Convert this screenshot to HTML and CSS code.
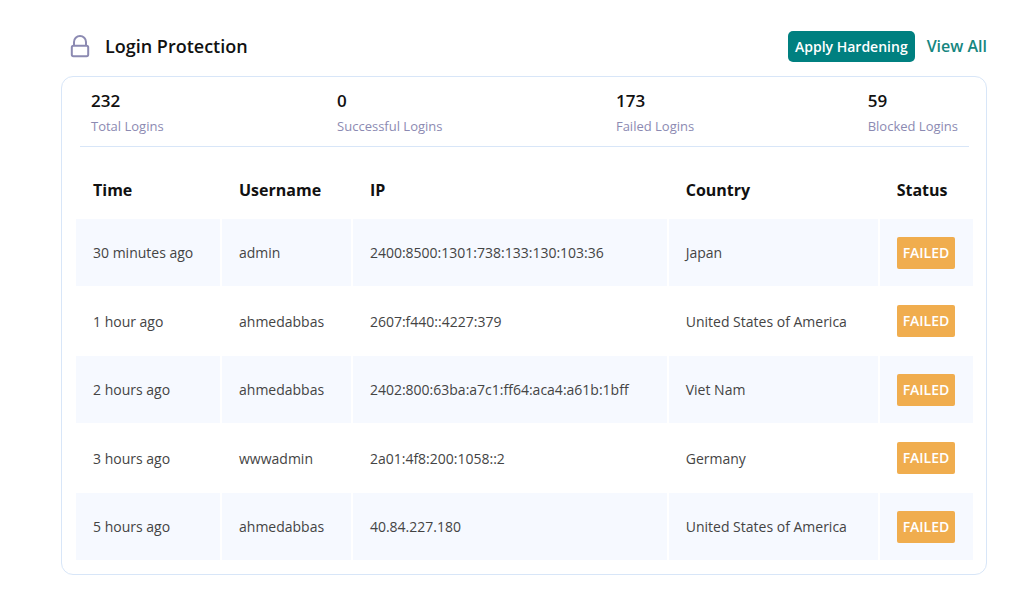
FILE: index.html
```
<!DOCTYPE html>
<html lang="en">
<head>
<meta charset="utf-8">
<meta name="viewport" content="width=device-width, initial-scale=1">
<title>Login Protection</title>
<link rel="stylesheet" href="styles.css">
</head>
<body>
<main class="panel">
  <header class="panel-head">
    <svg class="lock" viewBox="0 0 20 24" aria-hidden="true">
      <rect x="1.8" y="11.8" width="16.4" height="10.4" rx="1.6"/>
      <path d="M4 11.8V8a6 6 0 0 1 12 0v3.8"/>
    </svg>
    <h1 class="title">Login Protection</h1>
    <button class="harden" type="button">Apply Hardening</button>
    <a class="view-all" href="#">View All</a>
  </header>
  <section class="card">
    <dl class="stats">
      <div class="stat"><dt>Total Logins</dt><dd>232</dd></div>
      <div class="stat"><dt>Successful Logins</dt><dd>0</dd></div>
      <div class="stat"><dt>Failed Logins</dt><dd>173</dd></div>
      <div class="stat"><dt>Blocked Logins</dt><dd>59</dd></div>
    </dl>
    <table class="logins">
      <colgroup>
        <col class="col-time"><col class="col-user"><col class="col-ip"><col class="col-country"><col class="col-status">
      </colgroup>
      <thead>
        <tr><th scope="col">Time</th><th scope="col">Username</th><th scope="col">IP</th><th scope="col">Country</th><th scope="col">Status</th></tr>
      </thead>
      <tbody>
        <tr><td>30 minutes ago</td><td>admin</td><td>2400:8500:1301:738:133:130:103:36</td><td>Japan</td><td><span class="badge">FAILED</span></td></tr>
        <tr><td>1 hour ago</td><td>ahmedabbas</td><td>2607:f440::4227:379</td><td>United States of America</td><td><span class="badge">FAILED</span></td></tr>
        <tr><td>2 hours ago</td><td>ahmedabbas</td><td>2402:800:63ba:a7c1:ff64:aca4:a61b:1bff</td><td>Viet Nam</td><td><span class="badge">FAILED</span></td></tr>
        <tr><td>3 hours ago</td><td>wwwadmin</td><td>2a01:4f8:200:1058::2</td><td>Germany</td><td><span class="badge">FAILED</span></td></tr>
        <tr><td>5 hours ago</td><td>ahmedabbas</td><td>40.84.227.180</td><td>United States of America</td><td><span class="badge">FAILED</span></td></tr>
      </tbody>
    </table>
  </section>
</main>
</body>
</html>
```
FILE: styles.css
```
* {
  box-sizing: border-box;
}

body {
  margin: 0;
  background: #fff;
  color: #111;
  font-family: "Open Sans", "Noto Sans", sans-serif;
}

.panel {
  padding: 31px 37px 19px 61px;
}

.panel-head {
  display: flex;
  align-items: center;
  height: 31px;
  padding: 0 0 2px 9px;
}

.lock {
  width: 20px;
  height: 24px;
  margin-right: 15px;
  fill: none;
  stroke: #8c8ab2;
  stroke-width: 2;
}

.title {
  flex: 1;
  margin: 0;
  font-size: 18px;
  font-weight: 600;
  line-height: 24px;
}

.harden {
  align-self: flex-start;
  height: 31px;
  margin-right: 12px;
  padding: 0 7px;
  border: 0;
  border-radius: 5px;
  background: #008080;
  color: #fff;
  font: 600 14px "Open Sans", sans-serif;
}

.view-all {
  color: #158680;
  font-size: 16px;
  font-weight: 600;
  text-decoration: none;
}

.card {
  margin-top: 14px;
  padding: 12px 11px 12px 12px;
  border: 1px solid #d8e6f8;
  border-radius: 12px;
}

.stats {
  display: flex;
  justify-content: space-between;
  margin: 0 6px;
  padding: 0 11px 10px;
  border-bottom: 1px solid #d8e6f8;
}

.stat {
  display: flex;
  flex-direction: column-reverse;
  gap: 3px;
}

.stat dt {
  color: #8c8ab2;
  font-size: 13px;
  line-height: 20px;
}

.stat dd {
  margin: 0;
  font-size: 17px;
  font-weight: 600;
  line-height: 24px;
}

.logins {
  width: 100%;
  margin-top: 12px;
  border-spacing: 2px;
  table-layout: fixed;
}

.col-time {
  width: 16.2%;
}

.col-user {
  width: 14.5%;
}

.col-ip {
  width: 35.3%;
}

.col-country {
  width: 23.5%;
}

.col-status {
  width: 10.5%;
}

.logins th {
  height: 56px;
  padding: 2px 17px 0;
  font-size: 16px;
  font-weight: 700;
  text-align: left;
}

.logins td {
  height: 67px;
  padding: 0 17px;
  color: #444;
  font-size: 14px;
}

.logins tr:nth-child(even) td {
  height: 66px;
}

.logins tr:nth-child(odd) td {
  background: #f6f9ff;
}

.badge {
  display: inline-block;
  padding: 0 6px;
  border-radius: 2px;
  background: #f0ad4e;
  color: #fff;
  font-weight: 600;
  line-height: 32px;
  vertical-align: middle;
}
```
